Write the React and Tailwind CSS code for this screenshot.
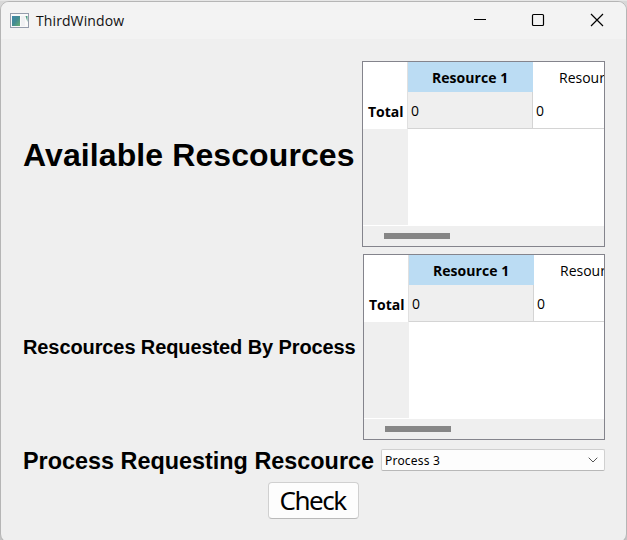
function ResourceTable({ className }) {
  return (
    <div
      className={`h-[186px] shrink-0 overflow-hidden border border-[#84848c] bg-white font-['Open_Sans','Noto_Sans',sans-serif] text-[14px] leading-[20px] font-normal whitespace-nowrap text-black ${className}`}
    >
      <div className="flex h-[163px]">
        <div className="flex w-[45px] shrink-0 flex-col">
          <div className="h-[67px] w-[45px] shrink-0 border-r border-[#e0e0e0] pt-[40px] pl-[5px] font-bold">
            Total
          </div>
          <div className="flex-1 bg-[#efefef]" />
        </div>
        <div className="min-w-0 flex-1 overflow-hidden">
          <div className="flex h-[30px]">
            <div className="w-[125px] shrink-0 bg-[#bbdcf3] pt-[6px] pl-[24px] font-bold tracking-[0.05px]">
              Resource 1
            </div>
            <div className="w-[125px] shrink-0 pt-[6px] pl-[26px]">
              Resource 2
            </div>
          </div>
          <div className="flex h-[37px] border-b border-[#d4d4d4]">
            <div className="w-[125px] shrink-0 border-r border-[#d4d4d4] bg-[#efefef] pt-[9px] pl-[3px]">
              0
            </div>
            <div className="w-[125px] shrink-0 pt-[9px] pl-[3px]">0</div>
          </div>
        </div>
      </div>
      <div className="mt-px flex h-[20px] bg-[#efefef] pt-[7px] pl-[21px]">
        <div className="h-[6px] w-[66px] bg-[#868686]" />
      </div>
    </div>
  );
}

function TitleBar() {
  return (
    <div className="flex h-[37px] shrink-0 items-center bg-[#f3f3f3] pl-[9px]">
      <svg width="19" height="16" viewBox="0 0 19 16" className="-mt-px shrink-0">
        <defs>
          <linearGradient id="pane" x1="0" y1="0" x2="1" y2="1">
            <stop offset="0" stopColor="#3f86aa" />
            <stop offset="0.5" stopColor="#438c91" />
            <stop offset="1" stopColor="#69b071" />
          </linearGradient>
        </defs>
        <rect x="0.5" y="1.5" width="18" height="14" fill="#fafafa" stroke="#959dac" />
        <rect x="2" y="4" width="8" height="10" fill="url(#pane)" />
        <rect x="11" y="4" width="4" height="10" fill="#f0f1f3" />
        <path d="M15.5 4h2v6z" fill="#4e9b83" />
      </svg>
      <span className="ml-[7px] flex-1 font-['Open_Sans','Noto_Sans',sans-serif] text-[14px] leading-[20px] tracking-[0.1px] text-[#111]">
        ThirdWindow
      </span>
      <svg width="153" height="37" viewBox="473 2 153 37" fill="none" stroke="#000" className="shrink-0">
        <path d="M474 19.5h12" />
        <rect x="532.5" y="14.5" width="11" height="11" rx="1" strokeWidth="1.2" />
        <path d="M591 14l12 12M603 14l-12 12" strokeWidth="1.2" />
      </svg>
    </div>
  );
}

export default function App() {
  return (
    <div className="h-[540px] w-[627px] overflow-hidden bg-[linear-gradient(to_bottom,#d8d8d8_0,#c0c0c0_146px,#484848_147px,#6c9db7_151px,#6c9db7_365px,#343034_373px,#343034_380px,#6c9db7_390px,#6c9db7_486px,#343034_494px,#343034_502px,#6c9db7_512px,#6c9db7_528px,#c4c4c4_531px)]">
      <div className="h-px w-full bg-[#e6e6e6]" />
      <div className="flex h-[542px] w-[627px] flex-col overflow-hidden rounded-[9px] border border-[#b5b5b5] bg-[#efefef] text-black">
        <TitleBar />
        <div className="flex flex-col pt-[22px] pr-[21px] pl-[22px] font-['Liberation_Sans',Arial,sans-serif] font-bold whitespace-nowrap">
          <div className="flex items-center justify-between">
            <h1 className="pt-[2px] text-[32px] leading-[40px] tracking-[0.1px]">Available Rescources</h1>
            <ResourceTable className="w-[243px]" />
          </div>
          <div className="mt-[7px] flex items-center justify-between">
            <h2 className="text-[20px] leading-[24px] tracking-[-0.1px]">Rescources Requested By Process</h2>
            <ResourceTable className="w-[242px]" />
          </div>
          <div className="mt-[7px] flex h-[28px] items-center justify-between">
            <h2 className="pb-px text-[23.4px] leading-[28px]">Process Requesting Rescource</h2>
            <button className="mb-[3px] flex h-[22px] w-[224px] items-center justify-between rounded-[2px] border border-[#d0d0d0] border-b-[#b8b8b8] bg-[#fdfdfd] pr-[6px] pl-[3px] font-['Noto_Sans','Open_Sans',sans-serif] text-[12px] leading-[18px] font-normal tracking-[0.2px]">
              <span className="pt-[2px]">Process 3</span>
              <svg width="10" height="6" viewBox="0 0 10 6" fill="none" stroke="#555">
                <path d="M0.7 0.7L5 5l4.3-4.3" />
              </svg>
            </button>
          </div>
          <button className="mt-[7px] ml-[245px] h-[37px] w-[91px] rounded-[4px] border border-[#d0d0d0] border-b-[#bababa] bg-[#fdfdfd] pr-[2px] font-['Noto_Sans','Open_Sans',sans-serif] text-[26px] leading-[35px] font-normal tracking-[-1.5px]">
            Check
          </button>
        </div>
      </div>
    </div>
  );
}
